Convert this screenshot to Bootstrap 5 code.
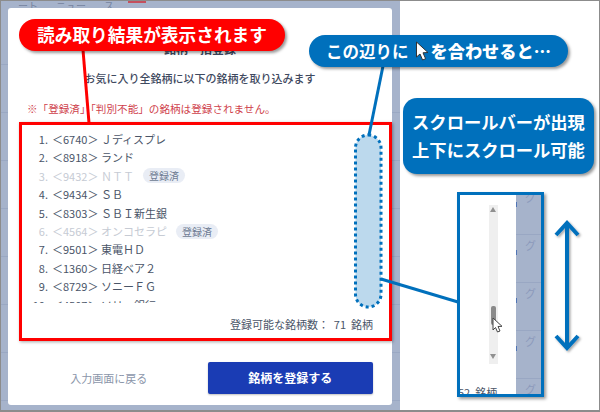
<!DOCTYPE html>
<html lang="ja">
<head>
<meta charset="utf-8">
<title>銘柄一括登録</title>
<link href="https://cdn.jsdelivr.net/npm/bootstrap@5.3.0/dist/css/bootstrap.min.css" rel="stylesheet">
<style>
html,body{margin:0;height:100%;background:#fff;overflow:hidden}
body{font-family:"Noto Sans CJK JP","Liberation Sans",sans-serif;color:#465065}
.stage{position:relative;width:600px;height:412px;border:1px solid #8c8c8c;border-bottom-width:2px;overflow:hidden;background:#fff}
.backdrop{width:399px;height:100%;padding:0 7px 0 7px;background-color:#a6b3cb;background-image:repeating-linear-gradient(180deg,transparent 0 47px,#9aa8c3 47px 48px);background-position:0 16px}
.topstrip{height:7px;overflow:hidden;font-size:10px;line-height:10px;color:#75839f;gap:18px;padding-left:10px;margin-top:0}
.redmark{width:18px;height:2px;background:#c4505e;margin-left:-4px}
.dialog{height:397px;width:384px;border-radius:3px;background:#fff;border:0}
.dlg-title{font-size:12px;font-weight:700;line-height:16px;margin:33px 0 0;text-align:center;color:#3f4a5f}
.dlg-lead{font-size:11px;font-weight:500;line-height:16px;margin:13px 0 0;text-align:center;color:#3f4a5f}
.dlg-note{font-size:10.6px;line-height:16px;margin:15px 0 0 19px;color:#cf3f4c}
.redbox{margin:5px 0 0 11px;width:373px;height:219px;border:3px solid #f00;box-shadow:1px 1px 3px rgba(0,0,0,.35)}
.stocklist{height:178px;overflow:hidden;margin:0;padding:5px 0 0 0;list-style:none;font-size:11px;line-height:18.4px;color:#4a5568}
.stocklist li{display:flex;align-items:center;height:18.4px}
.num{width:26px;text-align:right;margin-right:4px}
.muted-row{color:#c6cbd4}
.tag{font-size:10px;line-height:15px;padding:0 6px;border-radius:8px;background:#e9edf5;color:#6d7b92;margin-left:9px}
.countline{font-size:11px;line-height:16px;text-align:right;padding:13px 16px 0 0;color:#4a5568}
.dlg-foot{margin-top:21px;padding:0 19px 0 38px}
.backlink{font-size:11px;color:#8b96aa;width:126px;text-align:center;text-decoration:none;margin-right:36px;padding-left:0}
.go{width:166px;height:32px;background:#1a3cb4;border:0;border-radius:2px;color:#fff;font-size:12px;font-weight:700;padding:0;box-shadow:0 1px 2px rgba(0,0,0,.25)}
.bubble{position:absolute;color:#fff;font-weight:700;text-align:center;box-shadow:2px 2px 3px rgba(0,0,0,.4);white-space:nowrap;z-index:3}
.b-red{left:18px;top:18px;width:266px;height:32px;border-radius:16px;background:#f00;font-size:17.7px;line-height:31px}
.b-blue1{left:308px;top:34px;width:259px;height:32px;border-radius:16px;background:#0070bc;font-size:16.5px;line-height:31px;text-align:left;padding-left:17px}
.gapcursor{display:inline-block;width:22px}
.b-blue1 b{font-size:17.2px}
.b-blue2{left:402px;top:97px;width:191px;height:76px;border-radius:14px;background:#0070bc;font-size:17.3px;line-height:28px;padding-top:10px}
.overlay{position:absolute;left:-1px;top:-1px;z-index:2}
.overlay-top{z-index:4}
.lens{position:absolute;left:456px;top:191px;width:87px;height:205px;border:3px solid #0070bc;background:#fff;box-shadow:2px 2px 3px rgba(0,0,0,.4);overflow:hidden;z-index:3}
.lens-white{width:56px;height:100%;overflow:hidden}
.lens-gray{flex:1;background-color:#a6b3cb;background-image:repeating-linear-gradient(180deg,#4f74b5 0 5px,transparent 5px 48px),repeating-linear-gradient(180deg,transparent 0 47px,#99a7c3 47px 48px);background-size:1px 100%,100% 100%;background-repeat:no-repeat;background-position:0 7px,0 -8px;font-size:11px;line-height:48px;color:#8c9abb;padding-left:9px;overflow:hidden}
.lens-gray div{height:48px;margin-top:0}
.lens-gray div:first-child{margin-top:-22px}
.sb-track{width:9px;height:159px;background:#efefef;margin:10px 0 0 29px}
.sb-up,.sb-down{width:0;height:0;border-left:3.5px solid transparent;border-right:3.5px solid transparent;margin:2px 0 0 1px}
.sb-up{border-bottom:5px solid #909090}
.sb-down{border-top:5px solid #909090;margin:0 0 5px 1px}
.sb-thumb{width:5px;height:21px;margin:94px 0 29px 2px;background:#8a8a8a;border-radius:2px}
.lens-text{font-size:11px;line-height:14px;color:#4a5568;margin:21px 0 0 -2px}
</style>
</head>
<body>
<div class="stage">
  <div class="backdrop d-flex flex-column">
    <div class="topstrip d-flex"><span>ート</span><span>ニュー</span><span>ス</span><span class="redmark"></span></div>
    <div class="card dialog">
      <h5 class="dlg-title">銘柄一括登録</h5>
      <p class="dlg-lead">お気に入り全銘柄に以下の銘柄を取り込みます</p>
      <p class="dlg-note">※「登録済」「判別不能」の銘柄は登録されません。</p>
      <div class="redbox">
        <ol class="stocklist">
          <li><span class="num">1.</span><span>＜6740＞ Ｊディスプレ</span></li>
          <li><span class="num">2.</span><span>＜8918＞ ランド</span></li>
          <li class="muted-row"><span class="num">3.</span><span>＜9432＞ ＮＴＴ</span><span class="tag">登録済</span></li>
          <li><span class="num">4.</span><span>＜9434＞ ＳＢ</span></li>
          <li><span class="num">5.</span><span>＜8303＞ ＳＢＩ新生銀</span></li>
          <li class="muted-row"><span class="num">6.</span><span>＜4564＞ オンコセラピ</span><span class="tag">登録済</span></li>
          <li><span class="num">7.</span><span>＜9501＞ 東電ＨＤ</span></li>
          <li><span class="num">8.</span><span>＜1360＞ 日経ベア２</span></li>
          <li><span class="num">9.</span><span>＜8729＞ ソニーＦＧ</span></li>
          <li><span class="num">10.</span><span>＜4507＞ ソリー銀行</span></li>
        </ol>
        <div class="countline">登録可能な銘柄数：&nbsp; 71&nbsp; 銘柄</div>
      </div>
      <div class="dlg-foot d-flex align-items-center">
        <a class="backlink" href="#">入力画面に戻る</a>
        <button type="button" class="btn go">銘柄を登録する</button>
      </div>
    </div>
  </div>

  <svg class="overlay" width="600" height="412" viewBox="0 0 600 412" aria-hidden="true">
    <defs><filter id="sh" x="-20%" y="-20%" width="140%" height="140%"><feDropShadow dx="1.5" dy="1.5" stdDeviation="1" flood-color="#000" flood-opacity=".35"/></filter></defs>
    <line x1="83" y1="50" x2="89" y2="123" stroke="#f00" stroke-width="3"/>
    <rect x="355.5" y="135" width="25.5" height="172" rx="12.7" fill="#bcd9ed" stroke="#0070bc" stroke-width="3" stroke-dasharray="3 3"/>
    <line x1="383" y1="66" x2="369" y2="135" stroke="#0070bc" stroke-width="3"/>
    <line x1="381" y1="279" x2="458" y2="302" stroke="#0070bc" stroke-width="3"/>
    <g fill="none" stroke="#0070bc" stroke-width="4" filter="url(#sh)">
      <path d="M567 224V348"/>
      <path d="M556 235L567 223L578 235"/>
      <path d="M556 336L567 348L578 336"/>
    </g>
  </svg>

  <div class="bubble b-red">読み取り結果が表示されます</div>
  <div class="bubble b-blue1">この辺りに<span class="gapcursor"></span><b>を合わせると…</b></div>
  <div class="bubble b-blue2">スクロールバーが出現<br>上下にスクロール可能</div>

  <div class="lens d-flex">
    <div class="lens-white">
      <div class="sb-track d-flex flex-column align-items-start">
        <div class="sb-up"></div>
        <div class="sb-thumb"></div>
        <div class="sb-down"></div>
      </div>
      <div class="lens-text">52&nbsp; 銘柄</div>
    </div>
    <div class="lens-gray"><div>グ</div><div>グ</div><div>グ</div><div>グ</div><div>グ</div></div>
  </div>

  <svg class="overlay overlay-top" width="600" height="412" viewBox="0 0 600 412" aria-hidden="true">
    <path d="M416.5 42V57L420 54L422.6 60L425.6 58.7L423 52.8L428 52.5Z" fill="#fff" stroke="#333" stroke-width="1"/>
    <path d="M493 318V330L495.5 327.5L497.5 332L500 331L498 326.5L502 326.3Z" fill="#fff" stroke="#444" stroke-width="1"/>
  </svg>
</div>
<script src="https://cdn.jsdelivr.net/npm/bootstrap@5.3.0/dist/js/bootstrap.bundle.min.js"></script>
</body>
</html>
